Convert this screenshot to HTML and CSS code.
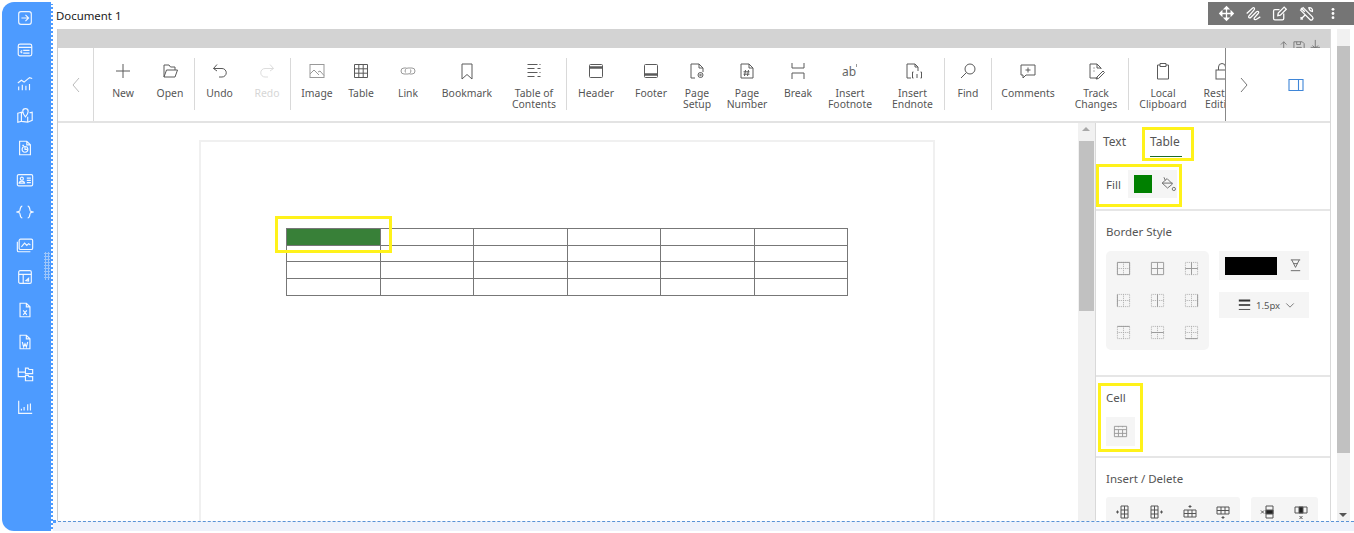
FILE: index.html
```html
<!DOCTYPE html>
<html lang="en">
<head>
    <meta charset="UTF-8">
    <meta name="viewport" content="width=device-width, initial-scale=1.0">
    <title>Document 1</title>
    <link rel="stylesheet" href="styles.css">
</head>
<body>
    <svg class="icon-defs" width="0" height="0">
        <symbol id="dots" viewBox="0 0 16 16">
            <path d="M1.500 1.500h13v13h-13zM8 1.500v13M1.500 8h13" fill="none" stroke="#aaa" stroke-dasharray="1 1"/>
        </symbol>
    </svg>

    <div class="app">
        <aside class="sidebar">
            <svg viewBox="0 0 20 20"><rect x="3" y="3" width="14" height="14" rx="2.500"/><path d="M6 10h8M10.500 6.500 14 10l-3.500 3.500"/></svg>
            <svg viewBox="0 0 20 20"><rect x="2.500" y="3.500" width="15" height="13" rx="2"/><path d="M2.500 7h15M8 10.500h7M8 13.500h7M5 12l2-1.500M5 12l2 1.500"/></svg>
            <svg viewBox="0 0 20 20"><path d="M2 10l4-3 3 2 6-5 3 1M3 18v-4M7 18v-6M11 18v-5M15 18v-7"/></svg>
            <svg viewBox="0 0 20 20"><path d="M2 8l4-1v10l-4 1zM6 17l7 1 5-2V7l-3 .5M6 7l2 .5M13 18v-6"/><path d="M10.500 12C8.500 9.500 7.500 8 7.500 6a3 3 0 0 1 6 0c0 2-1 3.500-3 6z"/></svg>
            <svg viewBox="0 0 20 20"><path d="M4 2.500h8l4 4v11H4zM12 2.500v4h4"/><circle cx="10" cy="11.500" r="3.200"/><path d="M10 8.500v3h3M7 7h2"/></svg>
            <svg viewBox="0 0 20 20"><rect x="1.500" y="4" width="17" height="12.500" rx="1.500"/><circle cx="6.500" cy="8.500" r="1.700"/><path d="M3.500 13.500c.3-3 5.700-3 6 0zM12 8h4.500M12 10.500h4.500M12 13h4.500"/></svg>
            <svg viewBox="0 0 20 20"><path d="M7 3.500c-3 0-2 5-3 5.500l-3 1 3 1c1 .5 0 5.500 3 5.500M13 3.500c3 0 2 5 3 5.500l3 1-3 1c-1 .5 0 5.500-3 5.500"/></svg>
            <svg viewBox="0 0 20 20"><rect x="3.500" y="3.500" width="15" height="11.500" rx="1.500"/><path d="M1.500 6.500V16a1.500 1.500 0 0 0 1.500 1.500h13M6 12l3.500-4 2.500 2.500 2-2 2 1.500"/></svg>
            <svg viewBox="0 0 20 20"><rect x="3" y="3" width="14" height="14" rx="1.500"/><path d="M3 7h14M8 7v10M11 14l3-2.500v3z"/></svg>
            <svg viewBox="0 0 20 20"><path d="M4.500 2.500h7l4 4v11h-11zM11.500 2.500v4h4M8 10.500l4 5M12 10.500l-4 5"/></svg>
            <svg viewBox="0 0 20 20"><path d="M4.500 2.500h7l4 4v11h-11zM11.500 2.500v4h4M7 10l1.500 5.500L10 12l1.500 3.500L13 10"/></svg>
            <svg viewBox="0 0 20 20"><path d="M2.500 3v10h8M2.500 8h8M10.500 3.500h3l1 1.500h4v4.500h-8zM10.500 11.500h3l1 1.500h4v4.500h-8z"/></svg>
            <svg viewBox="0 0 20 20"><path d="M3 3v14h15M6 14v-2M9 14v-4M13 14V7M16 14V6"/></svg>
        </aside>

        <div class="main">
            <div class="title-row">
                <span class="doc-title">Document 1</span>
                <div class="grip-bar">
                    <svg viewBox="0 0 20 20"><path d="M10 2v16M2 10h16M10 2 7.500 4.500h5zM10 18l-2.500-2.500h5zM2 10l2.500-2.500v5zM18 10l-2.500-2.500v5z"/></svg>
                    <svg viewBox="0 0 20 20"><path d="M2 10l7-6.500c2-1 3 1 1.500 2.500L4.500 13c-1 2 1 3 2.500 1.500L13.500 8c2-1.500 3.500.5 2 2L11 15c-1 2 1 3 3 1.500l4-2.500"/></svg>
                    <svg viewBox="0 0 20 20"><path d="M15 10v6a1.500 1.500 0 0 1-1.500 1.500h-9A1.500 1.500 0 0 1 3 16V7a1.500 1.500 0 0 1 1.500-1.500H10M8 12.500l.5-3L15.500 2.500l2.500 2.500-7 7z"/></svg>
                    <svg viewBox="0 0 20 20"><path d="M3 6 6 3l11 11a2 2 0 0 1-3 3zM12 3.500a3.500 3.500 0 0 1 5 4l-2 -.5-1.500-1.500-.5-2zM3 17l5-5M8 8 3.500 3.500M3 14.500 5.500 17"/></svg>
                    <svg viewBox="0 0 20 20" class="grip-more"><circle cx="10" cy="4" r="2"/><circle cx="10" cy="10" r="2"/><circle cx="10" cy="16" r="2"/></svg>
                </div>
            </div>

            <div class="frame">
                <div class="editor">
                    <div class="band">
                        <svg viewBox="0 0 46 14"><path d="M1 13h10M6 13V3M3 6l3-3 3 3M17 13V3h9l2 2v8zM20 13V9h5v4M20 3v3h4V3M35 9h10M40 1v9M37 7l3 3 3-3M36 13h8"/></svg>
                    </div>

                    <div class="ribbon">
                        <div class="ribbon-nav">
                            <svg viewBox="0 0 12 20"><path d="M9 3 3 10l6 7"/></svg>
                        </div>
                        <div class="tools">
                            <div class="tool w46">
                                <svg viewBox="0 0 20 20"><path d="M10 3v14M3 10h14"/></svg>
                                <span>New</span>
                            </div>
                            <div class="tool w48">
                                <svg viewBox="0 0 20 20"><path d="M4 16V4h5l1.500 2H15v3M4 16h11l2.500-7H6.500z"/></svg>
                                <span>Open</span>
                            </div>
                            <i class="sep"></i>
                            <div class="tool w49">
                                <svg viewBox="0 0 20 20"><path d="M7 3.500 3.500 7.500 7 10M3.500 7.500H12a4 4 0 0 1 0 8.500H9"/></svg>
                                <span>Undo</span>
                            </div>
                            <div class="tool w46 disabled">
                                <svg viewBox="0 0 20 20"><path d="M13 3.500l3.500 4L13 10M16.500 7.500H8a4 4 0 0 0 0 8.500h3"/></svg>
                                <span>Redo</span>
                            </div>
                            <i class="sep"></i>
                            <div class="tool w52">
                                <svg viewBox="0 0 20 20" class="soft"><rect x="3" y="3.500" width="14" height="13"/><path d="M3 13l4-4 5 5M11 11l2-1 4 4.500"/></svg>
                                <span>Image</span>
                            </div>
                            <div class="tool w36">
                                <svg viewBox="0 0 20 20"><path d="M3.500 3.500h13v13h-13zM3.500 7.800h13M3.500 12.200h13M7.800 3.500v13M12.200 3.500v13"/></svg>
                                <span>Table</span>
                            </div>
                            <div class="tool w58">
                                <svg viewBox="0 0 20 20" class="soft"><path d="M8.500 7H6a3 3 0 0 0 0 6h4a3 3 0 0 0 2.500-4.500M11.500 13H14a3 3 0 0 0 0-6h-4a3 3 0 0 0-2.500 4.500"/></svg>
                                <span>Link</span>
                            </div>
                            <div class="tool w60">
                                <svg viewBox="0 0 20 20"><path d="M5 3h10v15l-5-4.500L5 18z"/></svg>
                                <span>Bookmark</span>
                            </div>
                            <div class="tool w64 toc">
                                <svg viewBox="0 0 20 20"><path d="M3.500 3.500h10M15.500 3.500h1M3.500 7.500h7M13.500 7.500h3M3.500 11.500h10M15.500 11.500h1M3.500 15.500h7M13.500 15.500h3"/></svg>
                                <span>Table of<br>Contents</span>
                            </div>
                            <i class="sep"></i>
                            <div class="tool w58">
                                <svg viewBox="0 0 20 20"><rect x="3.500" y="3.500" width="13" height="13" rx="1"/><path d="M3.500 6.500h13" stroke-width="2.500"/></svg>
                                <span>Header</span>
                            </div>
                            <div class="tool w52">
                                <svg viewBox="0 0 20 20"><rect x="3.500" y="3.500" width="13" height="13" rx="1"/><path d="M3.500 13.500h13" stroke-width="2.500"/></svg>
                                <span>Footer</span>
                            </div>
                            <div class="tool w40">
                                <svg viewBox="0 0 20 20"><path d="M8 17H4V3h8l4 4v4M12 3v4h4"/><circle cx="13.500" cy="14" r="2.500"/><circle cx="13.500" cy="14" r=".8"/></svg>
                                <span>Page<br>Setup</span>
                            </div>
                            <div class="tool w60">
                                <svg viewBox="0 0 20 20"><path d="M4 3h8l4 4v10H4zM12 3v4h4M8.500 9 7.500 15M11.500 9l-1 6M6.500 10.800h6M6.500 13.200h6"/></svg>
                                <span>Page<br>Number</span>
                            </div>
                            <div class="tool w42">
                                <svg viewBox="0 0 20 20"><path d="M4 2v5h12V2M4 18v-6h12v6"/></svg>
                                <span>Break</span>
                            </div>
                            <div class="tool w62">
                                <svg viewBox="0 0 20 20" class="soft"><text x="2" y="15" class="icon-text">ab</text><path d="M16.500 3v3"/></svg>
                                <span>Insert<br>Footnote</span>
                            </div>
                            <div class="tool w63">
                                <svg viewBox="0 0 20 20"><path d="M8 17H4V3h8l3 3v4M12 3v3h3M10.500 11h-1v6h1M17.500 11h1v6h-1M14 13v4"/></svg>
                                <span>Insert<br>Endnote</span>
                            </div>
                            <i class="sep"></i>
                            <div class="tool w46">
                                <svg viewBox="0 0 20 20"><circle cx="12" cy="8" r="5"/><path d="M8.500 11.500 3 17"/></svg>
                                <span>Find</span>
                            </div>
                            <i class="sep"></i>
                            <div class="tool w72">
                                <svg viewBox="0 0 20 20"><path d="M3 4h14v10H8l-3 3v-3H3zM10 6.500v5M7.500 9h5"/></svg>
                                <span>Comments</span>
                            </div>
                            <div class="tool w64">
                                <svg viewBox="0 0 20 20"><path d="M12 17H4V3h7l4 4v1M11 3v4h4M7.500 7h1M7.500 10h1M11 16l6-6 1.500 1.500-6 6-2.500.5z"/></svg>
                                <span>Track<br>Changes</span>
                            </div>
                            <i class="sep"></i>
                            <div class="tool w68">
                                <svg viewBox="0 0 20 20"><path d="M7 4H4.500v14h11V4H13M7 5.500V2.500h6v3z"/></svg>
                                <span>Local<br>Clipboard</span>
                            </div>
                            <div class="tool w44 restrict">
                                <svg viewBox="0 0 20 20"><rect x="4" y="9" width="12" height="9"/><path d="M6.500 9V6a3.500 3.500 0 0 1 7 0v3"/></svg>
                                <span>Restrict<br>Editing</span>
                            </div>
                        </div>
                        <div class="ribbon-end">
                            <svg viewBox="0 0 12 20" class="chevron"><path d="M3 3l6 7-6 7"/></svg>
                            <svg viewBox="0 0 16 14" class="pane-toggle"><path d="M1 1.500h14v11H1zM10.500 1.500v11"/></svg>
                        </div>
                    </div>

                    <div class="work">
                        <div class="canvas">
                            <div class="page">
                                <table class="doc-table">
                                    <tr><td class="filled"></td><td></td><td></td><td></td><td></td><td></td></tr>
                                    <tr><td></td><td></td><td></td><td></td><td></td><td></td></tr>
                                    <tr><td></td><td></td><td></td><td></td><td></td><td></td></tr>
                                    <tr><td></td><td></td><td></td><td></td><td></td><td></td></tr>
                                </table>
                            </div>
                            <div class="mark mark-cell"></div>
                        </div>

                        <div class="scrollbar">
                            <i class="arrow-up"></i>
                            <div class="thumb thumb-inner"></div>
                        </div>

                        <div class="pane">
                            <div class="mark mark-tab"></div>
                            <div class="mark mark-fill"></div>
                            <div class="mark mark-cellbox"></div>

                            <div class="pane-top">
                                <div class="tabs">
                                    <span class="tab">Text</span>
                                    <span class="tab active">Table</span>
                                </div>
                                <div class="fill-row">
                                    <span class="fill-label">Fill</span>
                                    <div class="fill-box">
                                        <i class="swatch"></i>
                                        <svg viewBox="0 0 20 20"><path d="M9 4l6 6-5.500 4.500L3.500 9zM3.500 9h11.500M7 6 5.500 2.500"/><circle cx="16.500" cy="15.500" r="1.800"/></svg>
                                    </div>
                                </div>
                            </div>

                            <section class="pane-section border-section">
                                <h4 class="pane-title">Border Style</h4>
                                <div class="border-body">
                                    <div class="border-grid">
                                        <svg viewBox="0 0 16 16"><use href="#dots"/><path d="M1.500 1.500h13v13h-13z"/></svg>
                                        <svg viewBox="0 0 16 16"><path d="M1.500 1.500h13v13h-13zM8 1.500v13M1.500 8h13"/></svg>
                                        <svg viewBox="0 0 16 16"><use href="#dots"/><path d="M8 1.500v13M1.500 8h13"/></svg>
                                        <svg viewBox="0 0 16 16"><use href="#dots"/><path d="M1.500 1.500v13"/></svg>
                                        <svg viewBox="0 0 16 16"><use href="#dots"/><path d="M8 1.500v13"/></svg>
                                        <svg viewBox="0 0 16 16"><use href="#dots"/><path d="M14.500 1.500v13"/></svg>
                                        <svg viewBox="0 0 16 16"><use href="#dots"/><path d="M1.500 1.500h13"/></svg>
                                        <svg viewBox="0 0 16 16"><use href="#dots"/><path d="M1.500 8h13"/></svg>
                                        <svg viewBox="0 0 16 16"><use href="#dots"/><path d="M1.500 14.500h13"/></svg>
                                    </div>
                                    <div class="border-side">
                                        <div class="color-box">
                                            <i class="black-swatch"></i>
                                            <svg viewBox="0 0 16 16"><path d="M3 2h10M4 2l4 8 4-8M6 6h4M3 13.500h10" /></svg>
                                        </div>
                                        <div class="weight-box">
                                            <svg viewBox="0 0 16 14" class="weight-icon"><path d="M1 1.500h14" stroke-width="2.500"/><path d="M1 7h14" stroke-width="2"/><path d="M1 12.500h14"/></svg>
                                            <span>1.5px</span>
                                            <svg viewBox="0 0 12 8" class="weight-caret"><path d="M1.500 1.500 6 6l4.500-4.500"/></svg>
                                        </div>
                                    </div>
                                </div>
                            </section>

                            <section class="pane-section cell-section">
                                <h4 class="pane-title">Cell</h4>
                                <div class="cell-btn">
                                    <svg viewBox="0 0 16 16"><path d="M1.500 2.500h13v11h-13zM1.500 6h13M1.500 10h13M5.800 6v7.500M10.200 6v7.500M5.800 2.500v1M10.200 2.500v1"/></svg>
                                </div>
                            </section>

                            <section class="pane-section insert-section">
                                <h4 class="pane-title">Insert / Delete</h4>
                                <div class="insert-row">
                                    <div class="insert-group wide">
                                        <svg viewBox="0 0 16 16"><path d="M6 2h7v12H6zM9.500 2v12M6 6h7M6 10h7M1 8h3M2.500 6.500v3"/></svg>
                                        <svg viewBox="0 0 16 16"><path d="M3 2h7v12H3zM6.500 2v12M3 6h7M3 10h7M12 8h3M13.500 6.500v3"/></svg>
                                        <svg viewBox="0 0 16 16"><path d="M2 6h12v7H2zM2 9.500h12M6 6v7M10 6v7M8 1v3M6.500 2.500h3"/></svg>
                                        <svg viewBox="0 0 16 16"><path d="M2 3h12v7H2zM2 6.500h12M6 3v7M10 3v7M8 12v3M6.500 13.500h3"/></svg>
                                    </div>
                                    <div class="insert-group narrow">
                                        <svg viewBox="0 0 16 16"><path d="M6 2h7v12H6zM1 6.500l3 3M4 6.500l-3 3"/><path d="M6 6h7v4H6z" class="solid"/></svg>
                                        <svg viewBox="0 0 16 16"><path d="M2 3h12v6H2z"/><path d="M6 3h4v6H6z" class="solid"/><path d="M6.500 12l3 3M9.500 12l-3 3"/></svg>
                                    </div>
                                </div>
                            </section>
                        </div>
                    </div>
                </div>

                <div class="outer-scroll">
                    <div class="thumb thumb-outer"></div>
                    <i class="arrow-down"></i>
                </div>
            </div>

            <div class="foot">
                <i class="foot-corner"></i>
            </div>
        </div>
    </div>

    <div class="resize-grip"></div>
</body>
</html>
```

FILE: styles.css
```css
:root {
    --blue: #4d9bff;
    --line: #d9d9d9;
    --icon: #5a5a5a;
    --text: #555;
    --panel: #f5f5f5;
    --mark: #fff21a;
}

* {
    box-sizing: border-box;
    margin: 0;
    padding: 0;
}

html, body {
    height: 533px;
    overflow: hidden;
}

body {
    font-family: "Noto Sans", "Open Sans", Arial, sans-serif;
    font-size: 10.400px;
    color: var(--text);
    background: white;
    position: relative;
}

.icon-defs {
    position: absolute;
}

.app {
    display: flex;
    height: 533px;
    padding: 2px 0 2px 2px;
}

/* left rail */
.sidebar {
    flex: none;
    width: 51px;
    background: var(--blue);
    border-right: 2px dotted white;
    border-radius: 12px 0 0 12px;
    display: flex;
    flex-direction: column;
    align-items: center;
    gap: 14.400px;
    padding: 7px 4px 0 0;
}

.sidebar svg {
    width: 18px;
    height: 18px;
    flex: none;
    fill: none;
    stroke: white;
    stroke-width: 1.300;
    opacity: 0.92;
}

.resize-grip {
    position: absolute;
    left: 44px;
    top: 252px;
    width: 6px;
    height: 28px;
    background-image: radial-gradient(circle, #9cc5fb 1px, transparent 1.200px);
    background-size: 3px 3px;
}

.main {
    flex: 1;
    min-width: 0;
    display: flex;
    flex-direction: column;
}

/* title row */
.title-row {
    flex: none;
    height: 27px;
    display: flex;
    justify-content: space-between;
    align-items: flex-start;
    padding-left: 3px;
}

.doc-title {
    margin-top: 6px;
    font-size: 11.400px;
    line-height: 16px;
    color: #222;
}

.grip-bar {
    width: 146px;
    height: 23px;
    background: #757575;
    display: flex;
    align-items: center;
    gap: 9.500px;
    padding-left: 10px;
}

.grip-bar svg {
    width: 17px;
    height: 17px;
    fill: none;
    stroke: white;
    stroke-width: 1.500;
}

.grip-bar .grip-more {
    fill: white;
    stroke: none;
    width: 14px;
    margin-left: 2px;
}

/* main frame */
.frame {
    flex: 1;
    min-height: 0;
    display: flex;
    padding-left: 4px;
}

.editor {
    flex: none;
    width: 1274px;
    display: flex;
    flex-direction: column;
    border-left: 1px solid #ccc;
    border-right: 1px solid var(--line);
    overflow: hidden;
}

.band {
    flex: none;
    height: 19px;
    background: #d3d3d3;
    overflow: hidden;
    display: flex;
    justify-content: flex-end;
    padding: 10px 9px 0 0;
}

.band svg {
    width: 43px;
    height: 13px;
    fill: none;
    stroke: #777;
    stroke-width: 1;
    flex: none;
}

/* ribbon */
.ribbon {
    flex: none;
    height: 75px;
    display: flex;
    border-bottom: 2px solid #e3e3e3;
}

.ribbon-nav {
    flex: none;
    width: 36px;
    border-right: 1px solid var(--line);
    display: flex;
    align-items: center;
    justify-content: center;
}

.ribbon-nav svg {
    width: 12px;
    height: 20px;
    fill: none;
    stroke: #bbb;
    stroke-width: 1;
}

.tools {
    flex: none;
    width: 1131px;
    display: flex;
    padding-left: 6px;
    overflow: hidden;
}

.tool {
    flex: none;
    display: flex;
    flex-direction: column;
    align-items: center;
    padding-top: 13px;
    text-align: center;
    line-height: 11px;
    white-space: nowrap;
}

.tool svg {
    width: 20px;
    height: 20px;
    flex: none;
    margin-bottom: 7px;
    fill: none;
    stroke: var(--icon);
    stroke-width: 1;
}

.tool svg.soft {
    stroke: #999;
}

.icon-text {
    font-size: 12px;
    fill: #666;
    stroke: none;
}

.tool.disabled {
    color: #d6d6d6;
}

.tool.disabled svg {
    stroke: #ddd;
}

.toc {
    margin-left: 5px;
}

.restrict {
    margin-left: 3px;
}

.w36 { width: 36px; }
.w40 { width: 40px; }
.w42 { width: 42px; }
.w44 { width: 44px; }
.w46 { width: 46px; }
.w48 { width: 48px; }
.w49 { width: 49px; }
.w52 { width: 52px; }
.w58 { width: 58px; }
.w60 { width: 60px; }
.w62 { width: 62px; }
.w63 { width: 63px; }
.w64 { width: 64px; }
.w68 { width: 68px; }
.w72 { width: 72px; }

.sep {
    flex: none;
    width: 1px;
    height: 52px;
    margin-top: 10px;
    background: var(--line);
}

.ribbon-end {
    flex: 1;
    border-left: 1px solid #888;
    display: flex;
    align-items: center;
    padding-left: 12px;
}

.ribbon-end .chevron {
    width: 12px;
    height: 20px;
    fill: none;
    stroke: #777;
    stroke-width: 1;
}

.ribbon-end .pane-toggle {
    width: 16px;
    height: 14px;
    margin-left: 38px;
    fill: none;
    stroke: #3f86d8;
    stroke-width: 1.100;
}

/* work area */
.work {
    flex: 1;
    min-height: 0;
    display: flex;
}

.canvas {
    flex: none;
    width: 1020px;
    padding: 17px 0 0 141px;
    position: relative;
    overflow: hidden;
}

.page {
    width: 736px;
    height: 500px;
    border: 2px solid #f0f0f0;
    padding: 86px 0 0 85px;
}

.doc-table {
    width: 562px;
    border-collapse: collapse;
    table-layout: fixed;
}

.doc-table td {
    height: 16.700px;
    border: 1px solid #777;
}

.doc-table .filled {
    background: #388038;
}

.scrollbar {
    flex: none;
    width: 17px;
    background: #f1f1f1;
    position: relative;
    padding: 18px 1px 0 1px;
}

.arrow-up {
    position: absolute;
    left: 4px;
    top: 4px;
    border: 4px solid transparent;
    border-top: 0;
    border-bottom: 4px solid #a8a8a8;
}

.arrow-down {
    position: absolute;
    left: 2px;
    bottom: 4px;
    border: 4px solid transparent;
    border-bottom: 0;
    border-top: 4px solid #555;
}

.thumb {
    background: #c1c1c1;
}

.thumb-inner {
    height: 170px;
}

.thumb-outer {
    height: 407px;
    margin-top: 17px;
}

.outer-scroll {
    flex: none;
    width: 13px;
    margin-left: 6px;
    background: #f1f1f1;
    position: relative;
}

/* properties pane */
.pane {
    flex: 1;
    min-width: 0;
    border-left: 1px solid var(--line);
    position: relative;
}

.pane-top {
    height: 88px;
    border-bottom: 2px solid #e6e6e6;
}

.tabs {
    display: flex;
    gap: 22px;
    padding: 9px 0 0 7px;
    font-size: 12px;
    line-height: 20px;
}

.tab {
    padding: 0 2px 4px 0;
    height: 25px;
}

.active {
    border-bottom: 1px solid #1d6b2c;
}

.fill-row {
    display: flex;
    align-items: center;
    padding: 13px 0 0 10px;
}

.fill-label {
    font-size: 11.500px;
    width: 22px;
}

.fill-box {
    width: 49px;
    height: 28px;
    background: var(--panel);
    display: flex;
    align-items: center;
    padding-left: 6px;
    gap: 7px;
}

.fill-box svg {
    width: 18px;
    height: 18px;
    fill: none;
    stroke: #666;
    stroke-width: 1;
}

.swatch {
    width: 18px;
    height: 18px;
    background: #008000;
}

.pane-section {
    border-bottom: 2px solid #e6e6e6;
    padding: 12px 0 0 10px;
}

.pane-title {
    font-size: 11.500px;
    font-weight: 400;
    line-height: 18px;
}

.border-section {
    height: 166px;
}

.border-body {
    display: flex;
    gap: 10px;
    margin-top: 10px;
}

.border-grid {
    width: 103px;
    height: 99px;
    background: var(--panel);
    border-radius: 5px;
    display: grid;
    grid-template-columns: repeat(3, 1fr);
    grid-template-rows: repeat(3, 1fr);
    justify-items: center;
    align-items: center;
    padding: 1px 0;
}

.border-grid svg {
    width: 15px;
    height: 15px;
    fill: none;
    stroke: #999;
    stroke-width: 1;
}

.border-side {
    width: 90px;
    display: flex;
    flex-direction: column;
    gap: 12px;
}

.color-box {
    height: 29px;
    background: var(--panel);
    display: flex;
    align-items: center;
    padding-left: 6px;
    gap: 11px;
}

.black-swatch {
    width: 52px;
    height: 18px;
    background: black;
}

.color-box svg {
    width: 15px;
    height: 15px;
    fill: none;
    stroke: #666;
    stroke-width: 1;
}

.weight-box {
    height: 26px;
    background: var(--panel);
    display: flex;
    align-items: center;
    padding-left: 19px;
    font-size: 9.500px;
}

.weight-icon {
    width: 13px;
    height: 14px;
    margin-right: 5px;
    fill: none;
    stroke: #333;
}

.weight-caret {
    width: 10px;
    height: 7px;
    margin-left: 5px;
    fill: none;
    stroke: #666;
    stroke-width: 1;
}

.cell-section {
    height: 81px;
}

.cell-btn {
    width: 29px;
    height: 29px;
    margin-top: 10px;
    background: var(--panel);
    display: flex;
    align-items: center;
    justify-content: center;
}

.cell-btn svg {
    width: 15px;
    height: 15px;
    fill: none;
    stroke: #999;
    stroke-width: 1;
}

.insert-section {
    border-bottom: 0;
}

.insert-row {
    display: flex;
    gap: 11px;
    margin-top: 9px;
}

.insert-group {
    height: 34px;
    background: var(--panel);
    border-radius: 3px;
    display: flex;
    gap: 17.300px;
    padding: 7px 0 0 9px;
}

.wide {
    width: 134px;
}

.narrow {
    width: 67px;
}

.insert-group svg {
    width: 16px;
    height: 16px;
    fill: none;
    stroke: #555;
    stroke-width: 1;
}

.insert-group .solid {
    fill: #222;
}

.foot {
    flex: none;
    height: 10px;
    background: #eef2fb;
    border-top: 1px dashed #5a93d6;
    position: relative;
}

.foot-corner {
    position: absolute;
    left: 0;
    top: -2px;
    width: 3px;
    height: 3px;
    background: var(--blue);
}

/* yellow callouts on the screenshot */
.mark {
    position: absolute;
    border: 3px solid var(--mark);
    pointer-events: none;
    z-index: 5;
}

.mark-cell {
    left: 217px;
    top: 93px;
    width: 117px;
    height: 37px;
}

.mark-tab {
    left: 46px;
    top: 4px;
    width: 52px;
    height: 34px;
}

.mark-fill {
    left: 0;
    top: 41px;
    width: 86px;
    height: 43px;
}

.mark-cellbox {
    left: 2px;
    top: 260px;
    width: 45px;
    height: 69px;
}
```
